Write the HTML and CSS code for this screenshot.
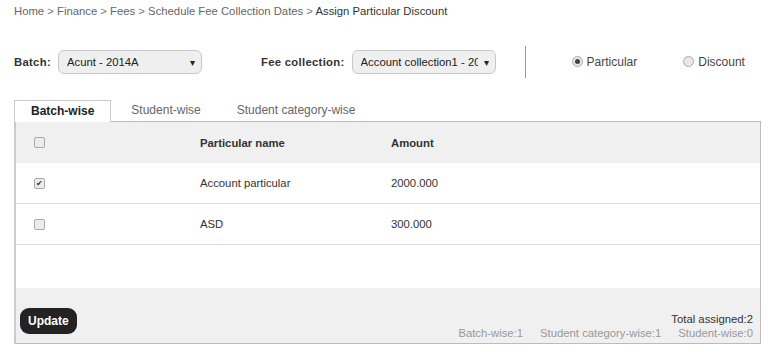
FILE: index.html
```html
<!DOCTYPE html>
<html lang="en">
	<head>
		<meta charset="UTF-8" />
		<title>Assign Particular Discount</title>
		<link rel="stylesheet" href="styles.css">
	</head>
	<body>
		<div class="breadcrumb">
			<span class="crumb">Home</span> &gt;
			<span class="crumb">Finance</span> &gt;
			<span class="crumb">Fees</span> &gt;
			<span class="crumb">Schedule Fee Collection Dates</span> &gt;
			<span class="current">Assign Particular Discount</span>
		</div>

		<!-- Filters -->
		<div class="filterBar">
			<div class="field">
				<label class="fieldLabel">Batch:</label>
				<div class="selectBox batchSelect">
					<span class="selectText">Acunt - 2014A</span>
					<span class="caret">&#9662;</span>
				</div>
			</div>
			<div class="field feeField">
				<label class="fieldLabel">Fee collection:</label>
				<div class="selectBox feeSelect">
					<span class="selectText">Account collection1 - 2014</span>
					<span class="caret">&#9662;</span>
				</div>
			</div>
			<div class="divider"></div>
			<div class="radios">
				<label class="radio"><span class="radioDot checked"></span>Particular</label>
				<label class="radio"><span class="radioDot"></span>Discount</label>
			</div>
		</div>

		<!-- Tabs -->
		<div class="tabs">
			<div class="tab active">Batch-wise</div>
			<div class="tab">Student-wise</div>
			<div class="tab">Student category-wise</div>
		</div>

		<div class="panel">
			<div class="row headRow">
				<div class="cellCheck"><span class="checkBox"></span></div>
				<div class="cellName">Particular name</div>
				<div class="cellAmount">Amount</div>
			</div>
			<div class="row">
				<div class="cellCheck"><span class="checkBox ticked">&#10004;</span></div>
				<div class="cellName">Account particular</div>
				<div class="cellAmount">2000.000</div>
			</div>
			<div class="row">
				<div class="cellCheck"><span class="checkBox"></span></div>
				<div class="cellName">ASD</div>
				<div class="cellAmount">300.000</div>
			</div>
			<div class="emptySpace"></div>
			<div class="footer">
				<button class="updateButton">Update</button>
				<div class="totals">
					<div class="totalLine">Total assigned:2</div>
					<div class="subTotals">
						<span>Batch-wise:1</span>
						<span>Student category-wise:1</span>
						<span>Student-wise:0</span>
					</div>
				</div>
			</div>
		</div>
	</body>
</html>
```

FILE: styles.css
```css
body {
	margin: 0;
	padding: 0 7px 0 14px;
	font-family: "Liberation Sans", Arial, sans-serif;
	font-size: 11.3px;
	color: #333;
	background: #fff;
}

.breadcrumb {
	padding-top: 4px;
	height: 20px;
	line-height: 14px;
	color: #777;
	white-space: nowrap;
}

.crumb {
	color: #666;
}

.current {
	color: #333;
}

.filterBar {
	display: flex;
	align-items: center;
	margin-top: 22px;
	height: 32px;
}

.field {
	display: flex;
	align-items: center;
	white-space: nowrap;
}

.feeField {
	margin-left: 59px;
}

.fieldLabel {
	font-weight: bold;
	color: #333;
	letter-spacing: 0.3px;
	margin-right: 7px;
}

.selectBox {
	display: flex;
	align-items: center;
	height: 22px;
	border: 1px solid #c8c8c8;
	border-radius: 6px;
	background: #efefef;
	padding: 0 6px 0 8px;
	color: #222;
	overflow: hidden;
}

.batchSelect {
	width: 128px;
}

.feeSelect {
	width: 128px;
}

.selectText {
	flex: 1;
	min-width: 0;
	white-space: nowrap;
	overflow: hidden;
}

.caret {
	font-size: 10px;
	margin-left: 6px;
	color: #222;
}

.divider {
	width: 1px;
	height: 32px;
	background: #999;
	margin-left: 29px;
}

.radios {
	display: flex;
	margin-left: 46px;
	gap: 46px;
	margin-top: -1px;
}

.radio {
	display: flex;
	align-items: center;
	font-size: 12px;
	color: #444;
	white-space: nowrap;
}

.radioDot {
	width: 9px;
	height: 9px;
	border: 1px solid #aaa;
	border-radius: 50%;
	background: #e8e8e8;
	margin-right: 4px;
	position: relative;
}

.radioDot.checked::after {
	content: "";
	position: absolute;
	left: 2px;
	top: 2px;
	width: 5px;
	height: 5px;
	border-radius: 50%;
	background: #444;
}

.tabs {
	display: flex;
	margin-top: 22px;
	height: 21px;
	border-bottom: 1px solid #bbb;
}

.tab {
	line-height: 21px;
	font-size: 12px;
	color: #666;
	padding: 0 18px;
	white-space: nowrap;
}

.tab.active {
	font-weight: bold;
	color: #222;
	background: #fff;
	border: 1px solid #ccc;
	border-bottom: none;
	padding: 0 16px 1px 16px;
	margin-bottom: -1px;
	line-height: 20px;
}

.tab.active + .tab {
	padding-left: 20px;
}

.panel {
	border: 1px solid #bbb;
	border-top: none;
	border-left-width: 2px;
	border-left-color: #ccc;
}

.row {
	display: flex;
	align-items: center;
	height: 40px;
	border-bottom: 1px solid #ddd;
}

.headRow {
	background: #f0f0f0;
	font-weight: bold;
	border-bottom: none;
	height: 41px;
}

.cellCheck {
	width: 166px;
	padding-left: 18px;
}

.cellName {
	width: 191px;
}

.checkBox {
	display: block;
	width: 9px;
	height: 9px;
	border: 1px solid #aaa;
	border-radius: 2px;
	background: #ececec;
	font-size: 8px;
	line-height: 9px;
	text-align: center;
	color: #333;
}

.emptySpace {
	height: 43px;
}

.footer {
	display: flex;
	justify-content: space-between;
	align-items: flex-end;
	background: #f0f0f0;
	height: 55px;
	padding: 0 7px 0 4px;
}

.updateButton {
	margin-bottom: 9px;
	background: #232323;
	color: #fff;
	font-family: "Liberation Sans", Arial, sans-serif;
	font-weight: bold;
	font-size: 12px;
	border: none;
	border-radius: 9px;
	padding: 0 8px;
	height: 26px;
}

.totals {
	text-align: right;
	padding-bottom: 3px;
}

.totalLine {
	color: #333;
	line-height: 14px;
}

.subTotals {
	display: flex;
	gap: 17px;
	color: #999;
	line-height: 14px;
}
```
